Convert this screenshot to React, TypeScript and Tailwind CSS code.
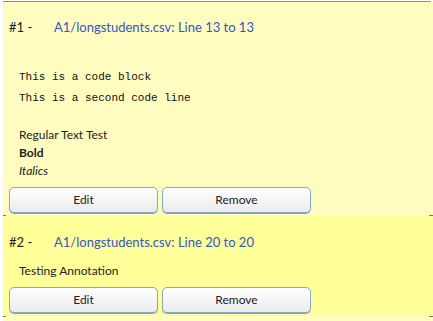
import React from 'react';

const Buttons = () => (
    <div className="flex gap-[4px]">
        <button className="w-[149px] h-[26px] rounded-[5px] border border-[#86a5cf] bg-gradient-to-b from-white to-[#ebebeb] shadow-[0_1px_0_#9a9a9a] text-[12px] text-[#222]">
            Edit
        </button>
        <button className="w-[149px] h-[26px] rounded-[5px] border border-[#86a5cf] bg-gradient-to-b from-white to-[#ebebeb] shadow-[0_1px_0_#9a9a9a] text-[12px] text-[#222]">
            Remove
        </button>
    </div>
);

const Header = ({ num, title }: { num: number; title: string }) => (
    <div className="flex items-center h-[20px] text-[13px]">
        <span className="w-[45px] text-[#222]">#{num} -</span>
        <span className="text-[#3456c8]">{title}</span>
    </div>
);

const Separator = () => (
    <div className="h-px flex justify-between bg-[#fffcc0]">
        <div className="w-[3px] bg-[#777]" />
        <div className="w-[4px] bg-[#777]" />
    </div>
);

const App = () => {
    return (
        <div className="bg-white min-h-[321px] pl-[3px] pt-px font-['Lato',sans-serif] overflow-hidden">
            <div className="h-px bg-[#8c8c8c] rounded-r-full mr-[2px]" />

            <div className="bg-[#fffcc0] h-[213px] pl-[6px] pt-[16px]">
                <Header num={1} title="A1/longstudents.csv: Line 13 to 13" />

                <div className="mt-[29px] pl-[10px] font-['Liberation_Mono',monospace] text-[11px] leading-[21px] text-[#111]">
                    <div>This is a code block</div>
                    <div>This is a second code line</div>
                </div>

                <div className="mt-[17px] pl-[10px] text-[12px] leading-[18px] text-[#222]">
                    <p>Regular Text Test</p>
                    <p className="font-bold">Bold</p>
                    <p className="italic">Italics</p>
                </div>

                <div className="mt-[7px]">
                    <Buttons />
                </div>
            </div>

            <Separator />

            <div className="bg-[#ffff99] h-[100px] pl-[6px] pt-[17px]">
                <Header num={2} title="A1/longstudents.csv: Line 20 to 20" />

                <p className="mt-[9px] pl-[10px] text-[12px] leading-[18px] text-[#222]">Testing Annotation</p>

                <div className="mt-[7px]">
                    <Buttons />
                </div>
            </div>

            <Separator />

            <div className="bg-[#fffcc0] h-[10px]" />
        </div>
    );
};

export default App;
